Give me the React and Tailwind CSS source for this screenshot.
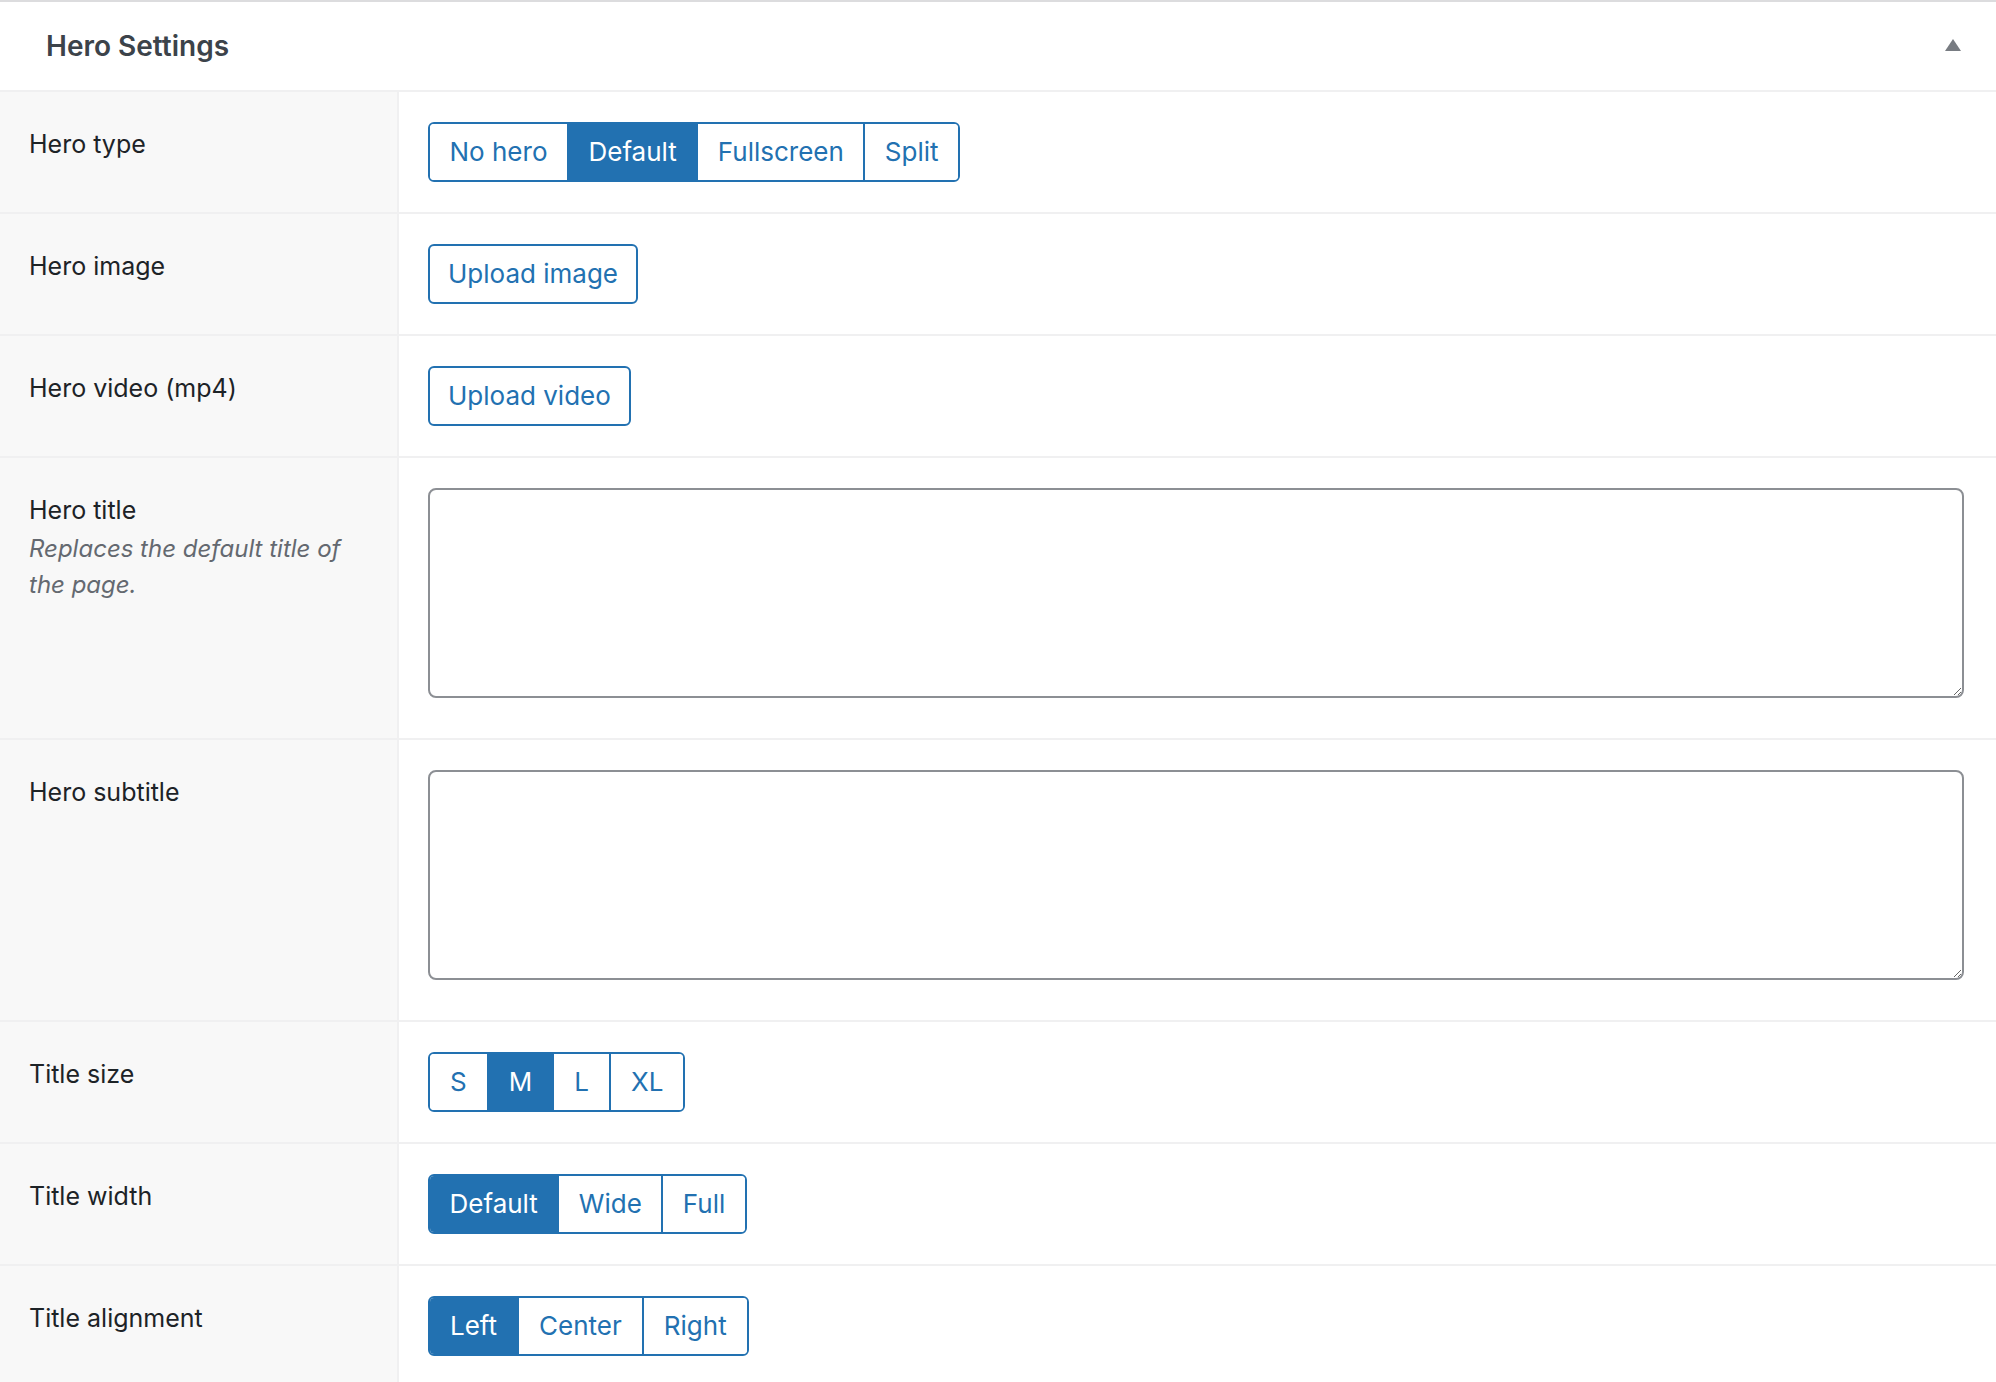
const heroTypes = ["No hero", "Default", "Fullscreen", "Split"];
const sizes = ["S", "M", "L", "XL"];
const widths = ["Default", "Wide", "Full"];
const aligns = ["Left", "Center", "Right"];

const Segmented = ({ options, selected, wide }) => (
    <div className="inline-flex h-[60px] rounded-[6px] border-2 border-[#2271b1] overflow-hidden">
        {options.map((opt, i) => (
            <button
                key={opt}
                type="button"
                className={
                    "h-full text-[26px] leading-none " +
                    (wide ? "px-[20px] " : "px-[19.5px] ") +
                    (i > 0 ? "border-l-2 border-[#2271b1] " : "") +
                    (opt === selected ? "bg-[#2271b1] text-white" : "bg-white text-[#2271b1]")
                }
            >
                {opt}
            </button>
        ))}
    </div>
);

const UploadButton = ({ children }) => (
    <button
        type="button"
        className="h-[60px] px-[18px] rounded-[6px] border-2 border-[#2271b1] bg-white text-[26px] leading-none text-[#2271b1]"
    >
        {children}
    </button>
);

const Row = ({ label, description, children, tall }) => (
    <div className="flex border-b-2 border-[#f0f0f1]">
        <div className="w-[399px] shrink-0 bg-[#f8f8f8] border-r-2 border-[#f0f0f1] pl-[29px] pr-[40px] pt-[35px]">
            <div className="text-[25px] leading-[35px] text-[#1d2327]">{label}</div>
            {description && (
                <p className="mt-[3px] text-[24px] leading-[36px] italic text-[#646970]">{description}</p>
            )}
        </div>
        <div className={"flex-1 pl-[29px] pr-[32px] pt-[30px] " + (tall ? "pb-[40px]" : "pb-[30px]")}>
            {children}
        </div>
    </div>
);

const Area = () => (
    <textarea className="block w-full h-[210px] rounded-[8px] border-2 border-[#8c8f94] bg-white resize-y outline-none" />
);

export default function App() {
    return (
        <div className="w-full min-h-screen bg-white font-['Inter',sans-serif]">
            <div className="flex items-center justify-between h-[92px] border-t-2 border-[#dcdcde] border-b-2 border-b-[#f0f0f1] pl-[46px] pr-[35px]">
                <h2 className="text-[28px] font-semibold text-[#3c434a]">Hero Settings</h2>
                <svg width="16" height="12" viewBox="0 0 16 12" className="mt-[-2px]">
                    <polygon points="8,0 16,12 0,12" fill="#787c82" />
                </svg>
            </div>

            <Row label="Hero type">
                <Segmented options={heroTypes} selected="Default" />
            </Row>
            <Row label="Hero image">
                <UploadButton>Upload image</UploadButton>
            </Row>
            <Row label="Hero video (mp4)">
                <UploadButton>Upload video</UploadButton>
            </Row>
            <Row label="Hero title" description="Replaces the default title of the page." tall>
                <Area />
            </Row>
            <Row label="Hero subtitle" tall>
                <Area />
            </Row>
            <Row label="Title size">
                <Segmented options={sizes} selected="M" wide />
            </Row>
            <Row label="Title width">
                <Segmented options={widths} selected="Default" />
            </Row>
            <Row label="Title alignment">
                <Segmented options={aligns} selected="Left" wide />
            </Row>
        </div>
    );
}
